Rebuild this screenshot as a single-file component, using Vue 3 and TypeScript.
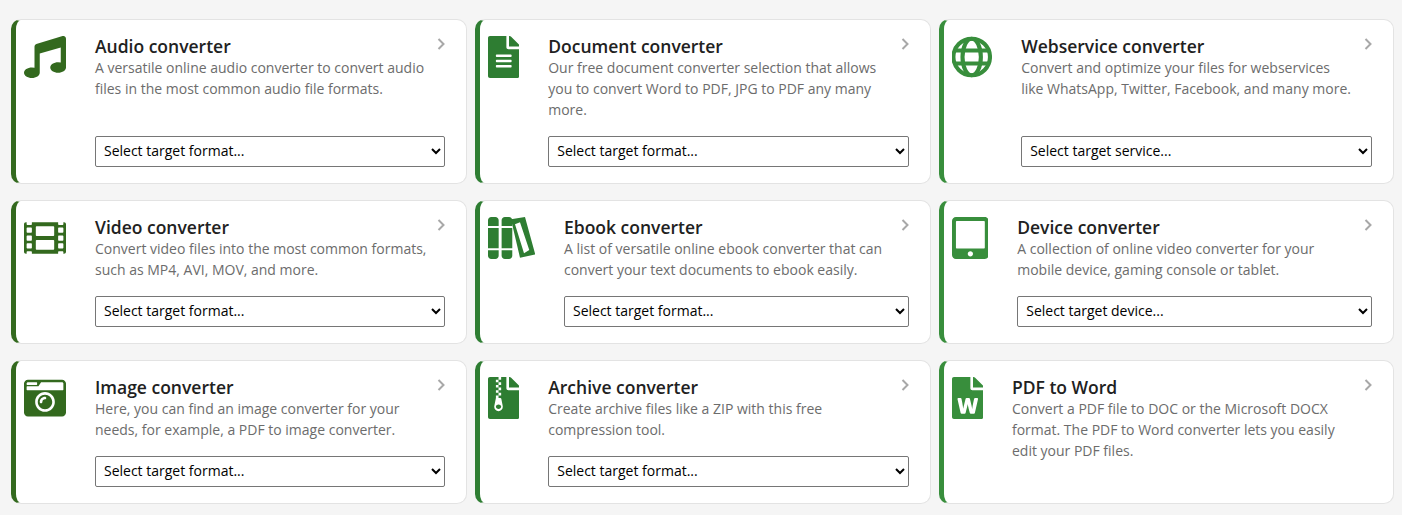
<script setup lang="ts">
interface Card {
  title: string
  desc: string
  color: string
  icon: string
  width: number
  d?: string
  target?: string
}

const DARK = '#33691e'
const MID = '#2e7d32'
const LIGHT = '#388e3c'

const cards: Card[] = [
  {
    title: 'Audio converter',
    desc: 'A versatile online audio converter to convert audio files in the most common audio file formats.',
    color: DARK, icon: 'path', width: 512, target: 'Select target format...',
    d: 'M470.38 1.51L150.41 96A32 32 0 0 0 128 126.51v261.41A139 139 0 0 0 96 384c-53 0-96 28.66-96 64s43 64 96 64 96-28.66 96-64V214.32l256-75v184.61a138.4 138.4 0 0 0-32-3.93c-53 0-96 28.66-96 64s43 64 96 64 96-28.65 96-64V32a32 32 0 0 0-41.62-30.49z'
  },
  {
    title: 'Document converter',
    desc: 'Our free document converter selection that allows you to convert Word to PDF, JPG to PDF any many more.',
    color: MID, icon: 'path', width: 384, target: 'Select target format...',
    d: 'M224 136V0H24C10.7 0 0 10.7 0 24v464c0 13.3 10.7 24 24 24h336c13.3 0 24-10.7 24-24V160H248c-13.2 0-24-10.8-24-24zm64 236c0 6.6-5.4 12-12 12H108c-6.6 0-12-5.4-12-12v-8c0-6.6 5.4-12 12-12h168c6.6 0 12 5.4 12 12v8zm0-64c0 6.6-5.4 12-12 12H108c-6.6 0-12-5.4-12-12v-8c0-6.6 5.4-12 12-12h168c6.6 0 12 5.4 12 12v8zm0-72v8c0 6.6-5.4 12-12 12H108c-6.6 0-12-5.4-12-12v-8c0-6.6 5.4-12 12-12h168c6.6 0 12 5.4 12 12zm96-114.1v6.1H256V0h6.1c6.4 0 12.5 2.5 17 7l97.9 98c4.5 4.5 7 10.6 7 16.9z'
  },
  {
    title: 'Webservice converter',
    desc: 'Convert and optimize your files for webservices like WhatsApp, Twitter, Facebook, and many more.',
    color: LIGHT, icon: 'globe', width: 496, target: 'Select target service...'
  },
  {
    title: 'Video converter',
    desc: 'Convert video files into the most common formats, such as MP4, AVI, MOV, and more.',
    color: DARK, icon: 'path', width: 512, target: 'Select target format...',
    d: 'M488 64h-8v20c0 6.6-5.4 12-12 12h-40c-6.6 0-12-5.4-12-12V64H96v20c0 6.6-5.4 12-12 12H44c-6.6 0-12-5.4-12-12V64h-8C10.7 64 0 74.7 0 88v336c0 13.3 10.7 24 24 24h8v-20c0-6.6 5.4-12 12-12h40c6.6 0 12 5.4 12 12v20h320v-20c0-6.6 5.4-12 12-12h40c6.6 0 12 5.4 12 12v20h8c13.3 0 24-10.7 24-24V88c0-13.3-10.7-24-24-24zM96 372c0 6.6-5.4 12-12 12H44c-6.6 0-12-5.4-12-12v-40c0-6.6 5.4-12 12-12h40c6.6 0 12 5.4 12 12v40zm0-96c0 6.6-5.4 12-12 12H44c-6.6 0-12-5.4-12-12v-40c0-6.6 5.4-12 12-12h40c6.6 0 12 5.4 12 12v40zm0-96c0 6.6-5.4 12-12 12H44c-6.6 0-12-5.4-12-12v-40c0-6.6 5.4-12 12-12h40c6.6 0 12 5.4 12 12v40zm272 208c0 6.6-5.4 12-12 12H156c-6.6 0-12-5.4-12-12v-96c0-6.6 5.4-12 12-12h200c6.6 0 12 5.4 12 12v96zm0-168c0 6.6-5.4 12-12 12H156c-6.6 0-12-5.4-12-12v-96c0-6.6 5.4-12 12-12h200c6.6 0 12 5.4 12 12v96zm112 152c0 6.6-5.4 12-12 12h-40c-6.6 0-12-5.4-12-12v-40c0-6.6 5.4-12 12-12h40c6.6 0 12 5.4 12 12v40zm0-96c0 6.6-5.4 12-12 12h-40c-6.6 0-12-5.4-12-12v-40c0-6.6 5.4-12 12-12h40c6.6 0 12 5.4 12 12v40zm0-96c0 6.6-5.4 12-12 12h-40c-6.6 0-12-5.4-12-12v-40c0-6.6 5.4-12 12-12h40c6.6 0 12 5.4 12 12v40z'
  },
  {
    title: 'Ebook converter',
    desc: 'A list of versatile online ebook converter that can convert your text documents to ebook easily.',
    color: MID, icon: 'books', width: 576, target: 'Select target format...'
  },
  {
    title: 'Device converter',
    desc: 'A collection of online video converter for your mobile device, gaming console or tablet.',
    color: LIGHT, icon: 'path', width: 448, target: 'Select target device...',
    d: 'M400 0H48C21.5 0 0 21.5 0 48v416c0 26.5 21.5 48 48 48h352c26.5 0 48-21.5 48-48V48c0-26.5-21.5-48-48-48zM224 480c-17.7 0-32-14.3-32-32s14.3-32 32-32 32 14.3 32 32-14.3 32-32 32zm176-108c0 6.6-5.4 12-12 12H60c-6.6 0-12-5.4-12-12V60c0-6.6 5.4-12 12-12h328c6.6 0 12 5.4 12 12v312z'
  },
  {
    title: 'Image converter',
    desc: 'Here, you can find an image converter for your needs, for example, a PDF to image converter.',
    color: DARK, icon: 'path', width: 512, target: 'Select target format...',
    d: 'M48 32C21.5 32 0 53.5 0 80v352c0 26.5 21.5 48 48 48h416c26.5 0 48-21.5 48-48V80c0-26.5-21.5-48-48-48H48zm0 32h106c3.3 0 6 2.7 6 6v20c0 3.3-2.7 6-6 6H38c-3.3 0-6-2.7-6-6V80c0-8.8 7.2-16 16-16zm426 96H38c-3.3 0-6-2.7-6-6v-36c0-3.3 2.7-6 6-6h138l30.2-45.3c1.1-1.7 3-2.7 5-2.7H464c8.8 0 16 7.2 16 16v74c0 3.3-2.7 6-6 6zM256 424c-66.2 0-120-53.8-120-120s53.8-120 120-120 120 53.8 120 120-53.8 120-120 120zm0-208c-48.5 0-88 39.5-88 88s39.5 88 88 88 88-39.5 88-88-39.5-88-88-88zm-48 104c-8.8 0-16-7.2-16-16 0-35.3 28.7-64 64-64 8.8 0 16 7.2 16 16s-7.2 16-16 16c-17.6 0-32 14.4-32 32 0 8.8-7.2 16-16 16z'
  },
  {
    title: 'Archive converter',
    desc: 'Create archive files like a ZIP with this free compression tool.',
    color: MID, icon: 'path', width: 384, target: 'Select target format...',
    d: 'M377 105L279.1 7c-4.5-4.5-10.6-7-17-7H256v128h128v-6.1c0-6.3-2.5-12.4-7-16.9zM128.4 336c-17.9 0-32.4 12.1-32.4 27 0 15 14.6 27 32.5 27s32.4-12.1 32.4-27-14.6-27-32.5-27zM224 136V0h-63.6v32h-32V0H24C10.7 0 0 10.7 0 24v464c0 13.3 10.7 24 24 24h336c13.3 0 24-10.7 24-24V160H248c-13.2 0-24-10.8-24-24zM95.9 32h32v32h-32zm32.3 384c-33.2 0-58-30.4-51.4-62.9L96.4 256v-32h32v-32h-32v-32h32v-32h-32V96h32V64h32v32h-32v32h32v32h-32v32h32v32h-32v32h22.1c5.7 0 10.7 4.1 11.8 9.7l17.3 87.7c6.4 32.4-18.4 62.6-51.4 62.6z'
  },
  {
    title: 'PDF to Word',
    desc: 'Convert a PDF file to DOC or the Microsoft DOCX format. The PDF to Word converter lets you easily edit your PDF files.',
    color: LIGHT, icon: 'path', width: 384,
    d: 'M224 136V0H24C10.7 0 0 10.7 0 24v464c0 13.3 10.7 24 24 24h336c13.3 0 24-10.7 24-24V160H248c-13.2 0-24-10.8-24-24zm57.1 120H305c7.7 0 13.4 7.1 11.7 14.7l-38 168c-1.2 5.5-6.1 9.3-11.7 9.3h-38c-5.5 0-10.3-3.8-11.6-9.1-25.8-103.5-20.8-81.2-25.6-110.5h-.5c-1.1 14.3-2.4 17.4-25.6 110.5-1.3 5.3-6.1 9.1-11.6 9.1H117c-5.6 0-10.5-3.9-11.7-9.4l-37.8-168c-1.7-7.5 4-14.6 11.7-14.6h24.5c5.7 0 10.7 4 11.8 9.7 15.6 78 20.1 109.5 21 122.2 1.6-10.2 7.3-32.7 29.4-122.7 1.3-5.4 6.1-9.1 11.7-9.1h29.1c5.6 0 10.4 3.8 11.7 9.2 24 100.4 28.8 124 29.6 129.4-.2-11.2-2.6-17.8 21.6-129.2 1-5.6 5.9-9.5 11.5-9.5zM384 121.9v6.1H256V0h6.1c6.4 0 12.5 2.5 17 7l97.9 98c4.5 4.5 7 10.6 7 16.9z'
  }
]

const iconWidth = (c: Card): string => `${(c.width / 512) * 42}px`
</script>

<template>
  <main class="grid">
    <a v-for="c in cards" :key="c.title" class="card" :style="{ borderLeftColor: c.color }">
      <svg
        class="icon"
        :style="{ width: iconWidth(c), color: c.color }"
        :viewBox="`0 0 ${c.width} 512`"
        aria-hidden="true"
      >
        <path v-if="c.icon === 'path'" :d="c.d" fill="currentColor" />
        <g v-else-if="c.icon === 'globe'" fill="none" stroke="currentColor" stroke-width="50">
          <circle cx="240" cy="256" r="223" />
          <ellipse cx="240" cy="256" rx="112" ry="223" />
          <path d="M27 176h426M27 336h426" />
        </g>
        <g v-else fill="currentColor">
          <path d="M0 110V40C0 18 18 0 40 0h50c22 0 40 18 40 40v70zM0 135h130v245H0zM0 405h130v67c0 22-18 40-40 40H40c-22 0-40-18-40-40z" />
          <path d="M166 110V40c0-22 18-40 40-40h50c22 0 40 18 40 40v70zM166 135h130v245H166zM166 405h130v67c0 22-18 40-40 40h-50c-22 0-40-18-40-40z" />
          <path
            fill-rule="evenodd"
            d="M280 28L451 0L576 455L390 496zM329 89L439 443L503 402L390 65z"
          />
        </g>
      </svg>
      <div class="body">
        <div class="head">
          <h3 class="title">{{ c.title }}</h3>
          <svg class="chev" viewBox="0 0 8 12" aria-hidden="true">
            <path d="M1.5 1L6.5 6L1.5 11" fill="none" stroke="currentColor" stroke-width="2" />
          </svg>
        </div>
        <p class="desc">{{ c.desc }}</p>
        <select v-if="c.target" class="sel">
          <option>{{ c.target }}</option>
        </select>
      </div>
    </a>
  </main>
</template>

<style scoped>
.grid {
  display: grid;
  grid-template-columns: repeat(3, minmax(0, 1fr));
  gap: 16px 8px;
  padding: 19px 7.6px 11px 11.2px;
  font-family: "Open Sans", sans-serif;
}
.card {
  display: flex;
  gap: 28.8px;
  box-sizing: border-box;
  padding: 16px 21px 16px 8px;
  background: #fff;
  border: 1px solid #e3e3e3;
  border-left: 5px solid;
  border-radius: 10px;
}
.icon {
  flex: none;
  height: 42px;
}
.body {
  flex: 1;
  min-width: 0;
  display: flex;
  flex-direction: column;
}
.head {
  display: flex;
  justify-content: space-between;
  align-items: flex-start;
}
.title {
  margin: 0;
  font-size: 17.5px;
  font-weight: 600;
  line-height: 21px;
  color: #212121;
}
.chev {
  flex: none;
  width: 8px;
  height: 12px;
  margin-top: 2px;
  color: #a8a8a8;
}
.desc {
  margin: 0 0 16px;
  padding-right: 18px;
  font-size: 14px;
  line-height: 21px;
  color: #6c6c6c;
}
.sel {
  display: block;
  width: 100%;
  height: 31px;
  margin-top: auto;
  box-sizing: border-box;
  padding: 0 4px 2px;
  font-family: inherit;
  font-size: 14px;
  color: #000;
  background: #fff;
  border: 1px solid #767676;
  border-radius: 2px;
}
</style>

<style>
html, body {
  background: #f5f5f5;
}
</style>
